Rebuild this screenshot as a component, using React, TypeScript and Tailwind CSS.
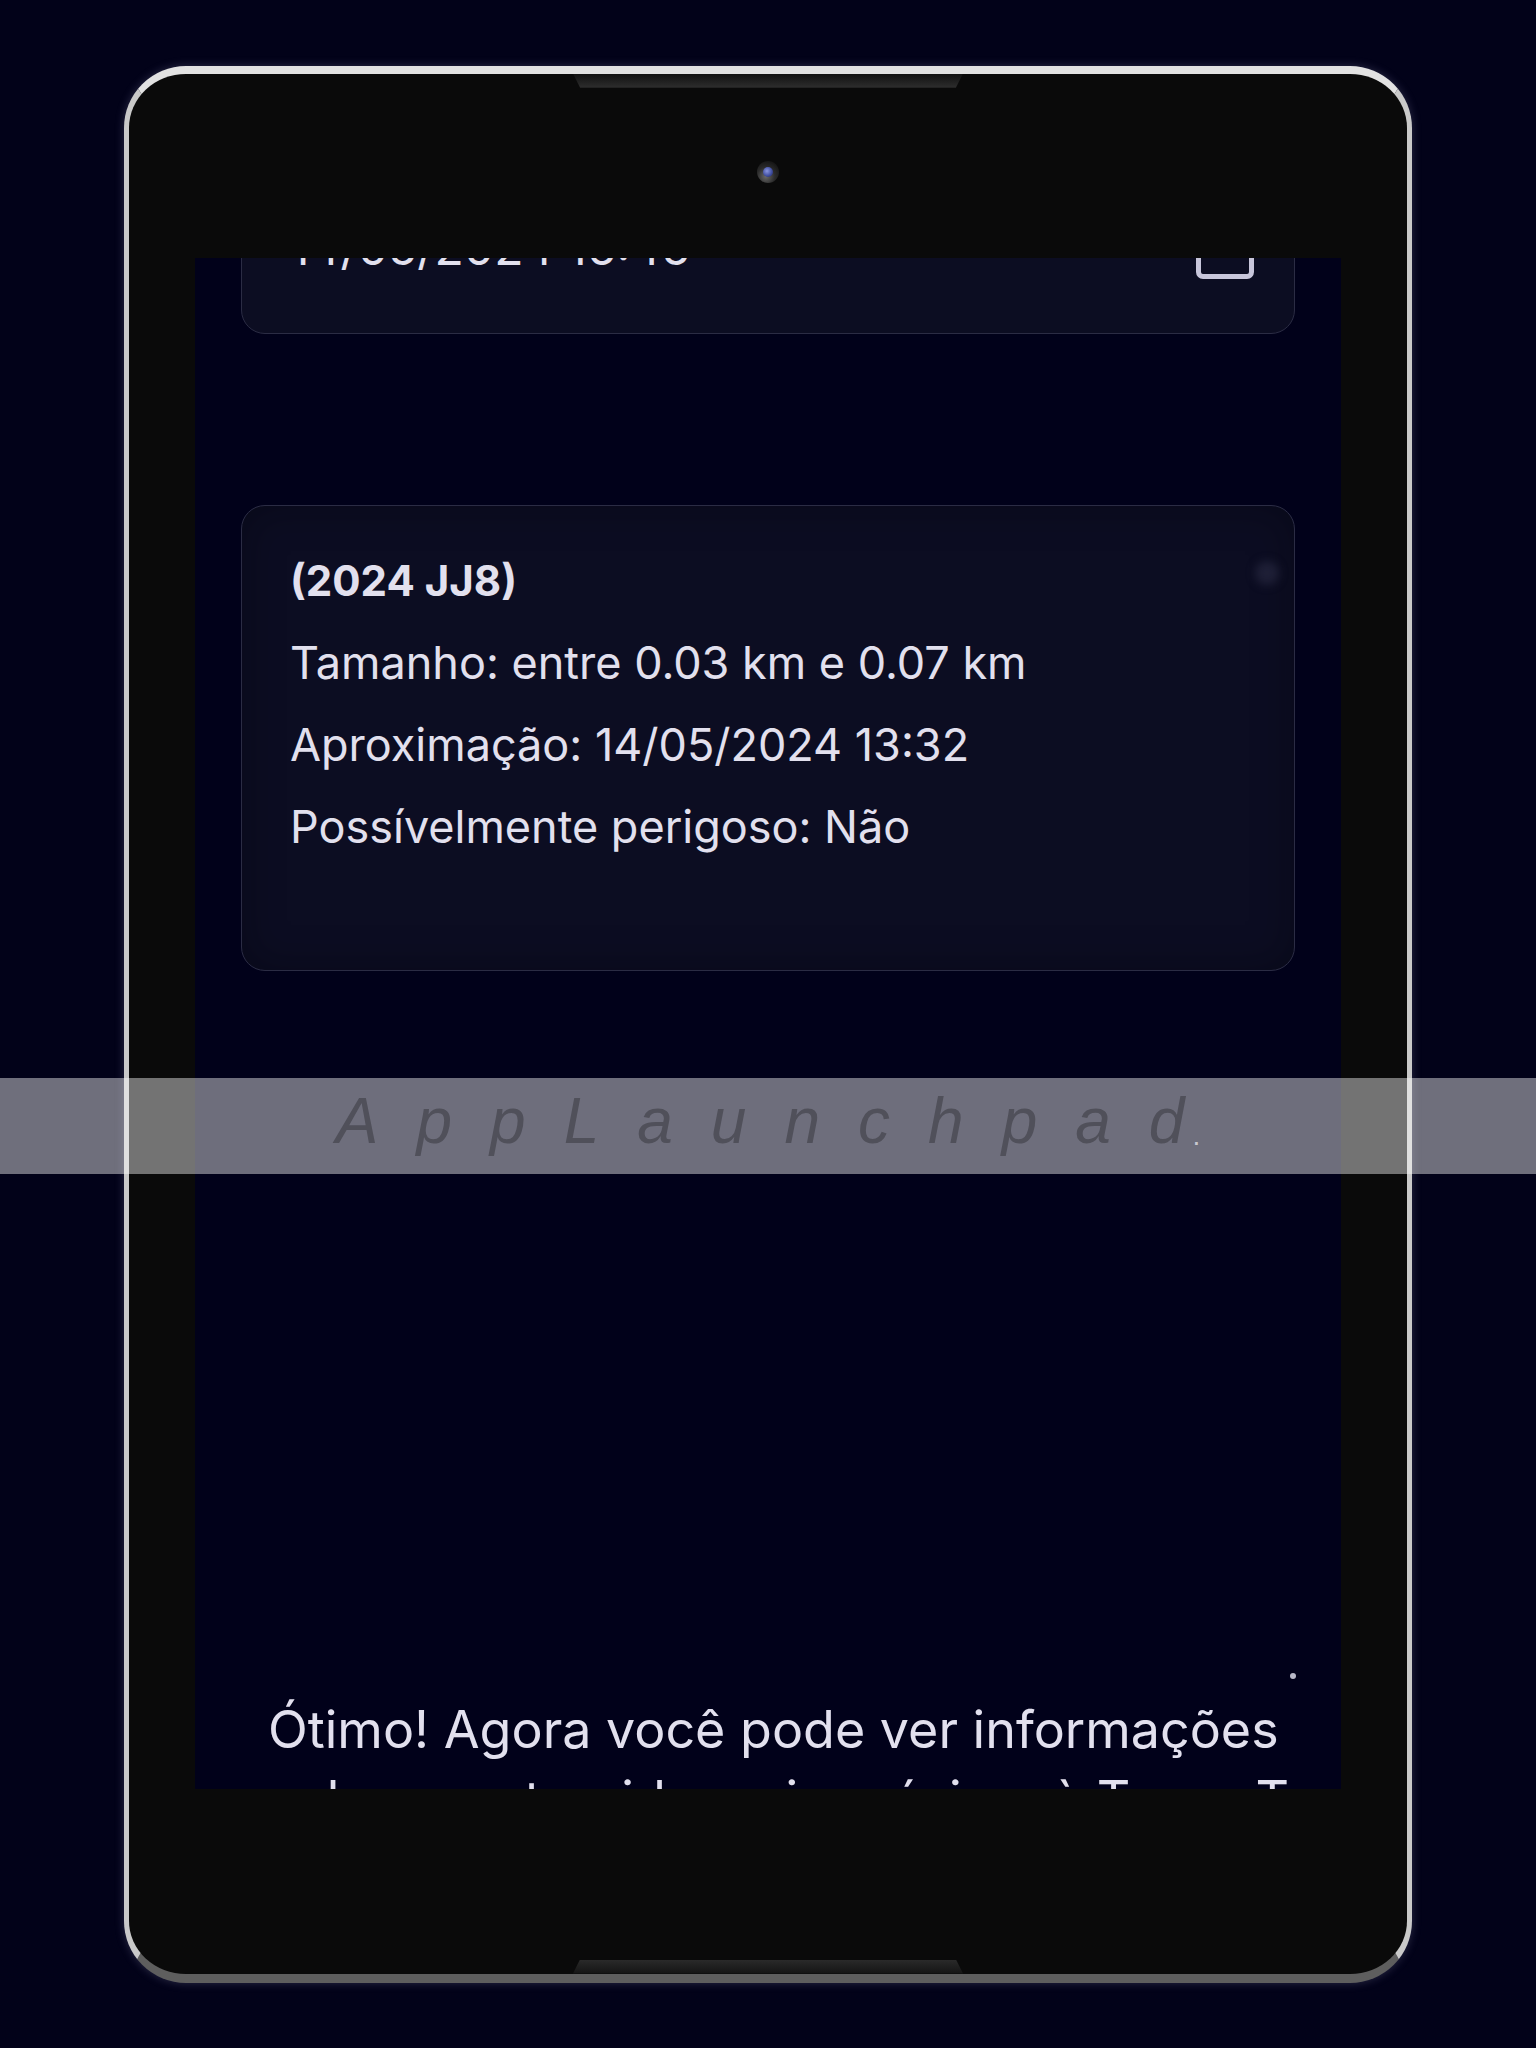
import React from "react";

export default function App() {
  const font = { fontFamily: "Inter, 'Noto Sans', sans-serif" };
  return (
    <div className="relative w-[1536px] h-[2048px] bg-[#020219] flex items-center justify-center overflow-hidden">
      {/* Device */}
      <div className="relative w-[1288px] h-[1917px] rounded-[62px] border-[5px] border-[#c9c9c9] border-t-[8px] border-t-[#e2e2e2] border-b-[9px] border-b-[#5e5e5e] bg-[#0a0a0a] shadow-[0_0_10px_rgba(170,170,210,0.25)] flex flex-col items-center">
        {/* top notch */}
        <div className="absolute top-0 left-[444px] w-[390px] h-[14px] [clip-path:polygon(0_0,100%_0,98.2%_100%,1.8%_100%)] bg-gradient-to-b from-[#121212] to-[#2c2c2c] border-b border-[#3a3a3a]" />
        {/* bottom notch */}
        <div className="absolute bottom-0 left-[444px] w-[390px] h-[14px] [clip-path:polygon(1.8%_0,98.2%_0,100%_100%,0_100%)] bg-gradient-to-b from-[#2a2a2a] to-[#141414]" />

        {/* top bezel with camera */}
        <div className="h-[184px] w-full flex justify-center shrink-0">
          <div className="mt-[87px] w-[22px] h-[22px] rounded-full bg-[radial-gradient(circle_at_40%_70%,#6a6a6a_0%,#2a2a2a_45%,#141414_80%)] flex items-center justify-center">
            <div className="w-[10px] h-[10px] rounded-full bg-[radial-gradient(circle_at_40%_40%,#8a96e0_0%,#3c4a9c_60%,#1e2450_100%)]" />
          </div>
        </div>

        {/* Screen */}
        <div className="relative w-[1146px] h-[1531px] bg-[#01011a] overflow-hidden flex flex-col px-[46px] shrink-0" style={font}>
          {/* partial card at top */}
          <div className="-mt-[124px] h-[200px] shrink-0 rounded-[24px] border border-[#2b2c44] bg-[#0c0d22] flex items-end justify-between pl-[48px] pr-[40px] pb-[54px]">
            <span className="text-[48px] leading-none text-[#e2e0ee] mb-[7px]">14/05/2024 16:45</span>
            <div className="w-[58px] h-[58px] rounded-[7px] border-[5px] border-[#c8c6db]" />
          </div>

          {/* main card */}
          <div className="relative mt-[171px] h-[466px] shrink-0 rounded-[24px] border border-[#2b2c44] bg-[#0c0d22] shadow-[inset_0_0_40px_rgba(0,0,10,0.35)] pt-[49px] px-[48px] flex flex-col gap-[30px] text-[#e2e0ee]">
            <div className="absolute left-[1013px] top-[55px] w-[24px] h-[24px] rounded-full bg-[#1e1f36] blur-[4px]" />
            <div className="text-[42px] font-bold leading-[52px]">(2024 JJ8)</div>
            <div className="text-[45px] leading-[52px]">Tamanho: entre 0.03 km e 0.07 km</div>
            <div className="text-[45px] leading-[52px]">Aproximação: 14/05/2024 13:32</div>
            <div className="text-[45px] leading-[52px]">Possívelmente perigoso: Não</div>
          </div>

          {/* bottom text */}
          <div className="mt-[724px] ml-[27px] text-[52px] leading-[70px] text-[#e2e0ee] whitespace-nowrap">
            <div>Ótimo! Agora você pode ver informações</div>
            <div>sobre o asteroide mais próximo à Terra. Toque</div>
          </div>

          {/* star dot */}
          <div className="absolute left-[1095px] top-[1415px] w-[6px] h-[6px] rounded-full bg-[#b8b8c8]" />
        </div>
      </div>

      {/* watermark band */}
      <div className="absolute left-0 top-[1078px] w-full h-[96px] bg-[rgba(255,255,255,0.43)] flex items-center justify-center pb-[10px]">
        <span className="italic text-[64px] leading-none tracking-[38px] text-[#50505a]" style={{ fontFamily: "'Liberation Sans', Arial, sans-serif" }}>
          AppLaunchpad
        </span>
        <span className="text-[28px] leading-none text-[#c8c8d0] -ml-[30px] mt-[30px]" style={{ fontFamily: "'Liberation Sans', Arial, sans-serif" }}>.</span>
      </div>
    </div>
  );
}
